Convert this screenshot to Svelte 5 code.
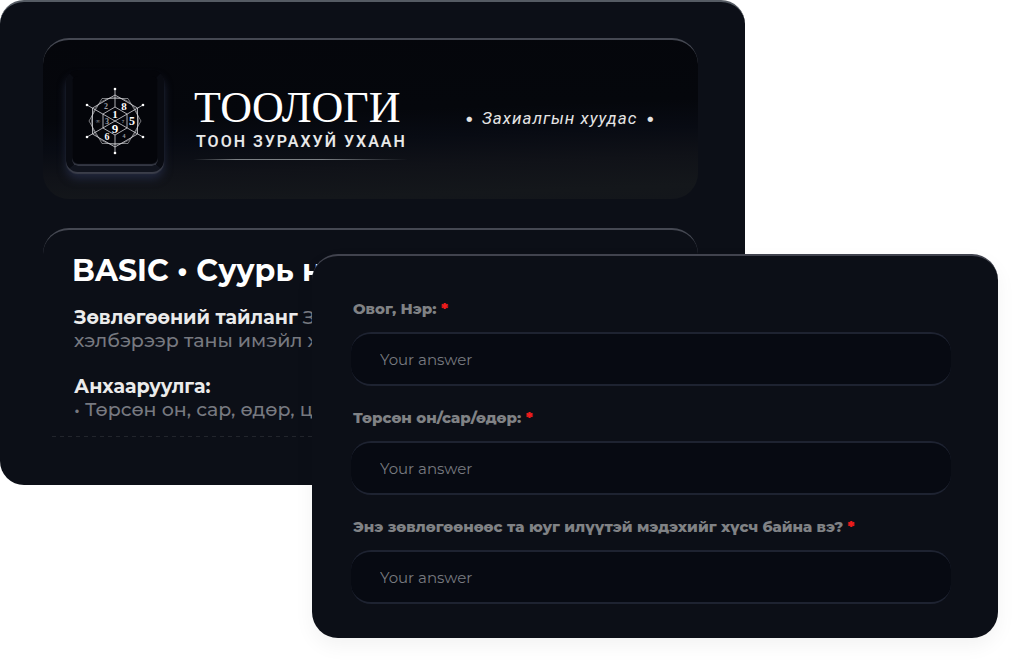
<script>
  let fields = [
    { id: 'name', label: 'Овог, Нэр:', value: '' },
    { id: 'birth', label: 'Төрсөн он/сар/өдөр:', value: '' },
    { id: 'question', label: 'Энэ зөвлөгөөнөөс та юуг илүүтэй мэдэхийг хүсч байна вэ?', value: '' }
  ];

  // digits of the emblem, relative to its centre
  const digits = [
    { text: '2', x: -9, y: -15, size: 8, dim: true },
    { text: '8', x: 9, y: -15, size: 11 },
    { text: '1', x: 0, y: -7, size: 11 },
    { text: '3', x: -8, y: 0, size: 8, dim: true },
    { text: '7', x: 8, y: 0, size: 5, dim: true },
    { text: '5', x: 17, y: 0, size: 12 },
    { text: '∞', x: -17, y: 0, size: 6, dim: true },
    { text: '9', x: 0, y: 7, size: 13 },
    { text: '6', x: -8, y: 15, size: 10 },
    { text: '4', x: 9, y: 15, size: 6, dim: true }
  ];

  const spokes = [[0, -32], [28, -16], [28, 16], [0, 32], [-28, 16], [-28, -16]];
</script>

<main class="stage">
  <section class="order-card">
    <header class="banner">
      <div class="emblem">
        <svg viewBox="-34 -34 68 68" width="68" height="68" aria-hidden="true">
          <g fill="none" stroke="#d5d6da" stroke-width="0.8">
            <polygon points="0,-26 22.5,-13 22.5,13 0,26 -22.5,13 -22.5,-13" />
            <polygon points="26,0 13,-22.5 -13,-22.5 -26,0 -13,22.5 13,22.5" opacity="0.7" />
            <circle r="23.5" opacity="0.6" />
            <polygon points="0,-14 12,-7 12,7 0,14 -12,7 -12,-7" />
            <path d="M0-32V-14M0 14V32M-28-16 28 16M28-16-28 16" />
          </g>
          {#each spokes as [x, y]}
            <circle cx={x} cy={y} r="1.3" fill="#fff" />
          {/each}
          {#each digits as digit}
            <text
              class:dim={digit.dim}
              x={digit.x}
              y={digit.y}
              font-size={digit.size}
            >{digit.text}</text>
          {/each}
        </svg>
      </div>
      <div class="brand">
        <h1>ТООЛОГИ</h1>
        <p>ТООН ЗУРАХУЙ УХААН</p>
      </div>
      <p class="sheet"><span>•</span>Захиалгын хуудас<span>•</span></p>
    </header>

    <article class="info">
      <h2>BASIC • Суурь н</h2>
      <p><strong>Зөвлөгөөний тайланг</strong> З<br />хэлбэрээр таны имэйл х</p>
      <p><strong>Анхааруулга:</strong><br />• Төрсөн он, сар, өдөр, ц</p>
    </article>
  </section>

  <form class="form-card" on:submit|preventDefault>
    {#each fields as field}
      <div class="field">
        <label for={field.id}>{field.label} <span class="required">*</span></label>
        <input id={field.id} type="text" placeholder="Your answer" bind:value={field.value} />
      </div>
    {/each}
  </form>
</main>

<style>
  :global(body) {
    background: #fff;
  }

  .stage {
    display: grid;
    grid-template-columns: 312fr 433fr 253fr 26fr;
    align-items: start;
    padding-bottom: 32px;
    overflow: hidden;
    font-family: Montserrat, Inter, 'Noto Sans', sans-serif;
  }

  h1,
  h2,
  p {
    margin: 0;
  }

  .order-card {
    grid-area: 1 / 1 / 2 / 3;
    min-width: 0;
    box-sizing: border-box;
    padding: 36px 47px 34px 43px;
    background: #0c0f17;
    border-top: 2px solid #555b63;
    border-radius: 24px;
    overflow: hidden;
  }

  .banner {
    display: flex;
    align-items: center;
    box-sizing: border-box;
    height: 161px;
    padding: 2px 43px 0 23px;
    background: linear-gradient(178deg, #05060b 0%, #05070c 45%, #080b13 60%, #101218 76%, #14171b 92%, #13161b 100%);
    border-top: 2px solid #454852;
    border-radius: 26px;
  }

  .emblem {
    display: flex;
    align-items: center;
    justify-content: center;
    box-sizing: border-box;
    width: 98px;
    height: 102px;
    background: #04050a;
    border: 6px solid #090b12;
    border-top-color: #04050a;
    border-bottom-color: #11141e;
    border-radius: 12px;
    box-shadow:
      inset 0 -2px 1px #343743,
      0 2px 1px #3b3e4a,
      0 7px 8px #20263b;
  }

  .emblem text {
    fill: #fff;
    font-family: 'Liberation Serif', serif;
    font-weight: bold;
    text-anchor: middle;
    dominant-baseline: central;
  }

  .emblem text.dim {
    fill: #9c9da4;
  }

  .brand {
    margin-left: 30px;
    padding-top: 5px;
    color: #fff;
  }

  .brand h1 {
    font-family: 'Liberation Serif', serif;
    font-size: 44px;
    font-weight: 400;
    line-height: 44px;
  }

  .brand p {
    padding: 1px 0 6px 2px;
    font-family: Roboto, sans-serif;
    font-size: 16px;
    font-weight: 600;
    line-height: 22px;
    letter-spacing: 2px;
    color: #e8e8e8;
    white-space: nowrap;
    border-bottom: 1px solid;
    border-image: linear-gradient(90deg, transparent, #7c8084 20%, #7c8084 60%, transparent) 1;
  }

  .sheet {
    display: flex;
    gap: 8px;
    margin-left: auto;
    padding-bottom: 6px;
    font-family: Roboto, sans-serif;
    font-size: 17px;
    font-style: italic;
    line-height: 20px;
    letter-spacing: 1px;
    color: #e4e4e4;
    white-space: nowrap;
  }

  .sheet span {
    font-family: Inter, sans-serif;
    font-style: normal;
    letter-spacing: 0;
  }

  .info {
    margin-top: 29px;
    padding: 22px 0 14px 29px;
    border-top: 2px solid #454852;
    border-radius: 26px;
    font-size: 19px;
    font-weight: 500;
    line-height: 23px;
    color: #777980;
    white-space: nowrap;
  }

  .info h2 {
    font-size: 30px;
    line-height: 38px;
    color: #fff;
  }

  .info p {
    margin-top: 16px;
    padding-left: 2px;
  }

  .info p + p {
    margin-top: 23px;
  }

  .info::after {
    content: '';
    display: block;
    height: 1px;
    margin: 15px 20px 0 -20px;
    background: repeating-linear-gradient(90deg, #22252c 0 4px, transparent 4px 8px);
  }

  .info strong {
    color: #ebebeb;
  }

  .form-card {
    grid-area: 1 / 2 / 2 / 4;
    display: flex;
    flex-direction: column;
    gap: 20px;
    box-sizing: border-box;
    margin-top: 254px;
    padding: 41px 47px 34px 39px;
    background: #0c0f17;
    border-top: 2px solid #41434e;
    border-radius: 26px;
    box-shadow: 0 8px 20px rgba(0, 0, 0, 0.05);
  }

  .field {
    display: flex;
    flex-direction: column;
    gap: 11px;
  }

  label {
    padding-left: 2px;
    font-size: 15px;
    font-weight: 800;
    line-height: 24px;
    color: #808285;
  }

  .required {
    color: #ee1c1c;
    font-weight: 900;
  }

  input {
    box-sizing: border-box;
    width: 100%;
    height: 54px;
    padding: 0 29px;
    background: #070a12;
    border: solid #1e2331;
    border-width: 2px 0;
    border-radius: 20px;
    font-family: inherit;
    font-size: 15px;
    color: #d5d6da;
  }

  input::placeholder {
    color: #787a80;
    opacity: 1;
  }

  input:focus {
    outline: none;
    border-color: #454852;
  }
</style>
